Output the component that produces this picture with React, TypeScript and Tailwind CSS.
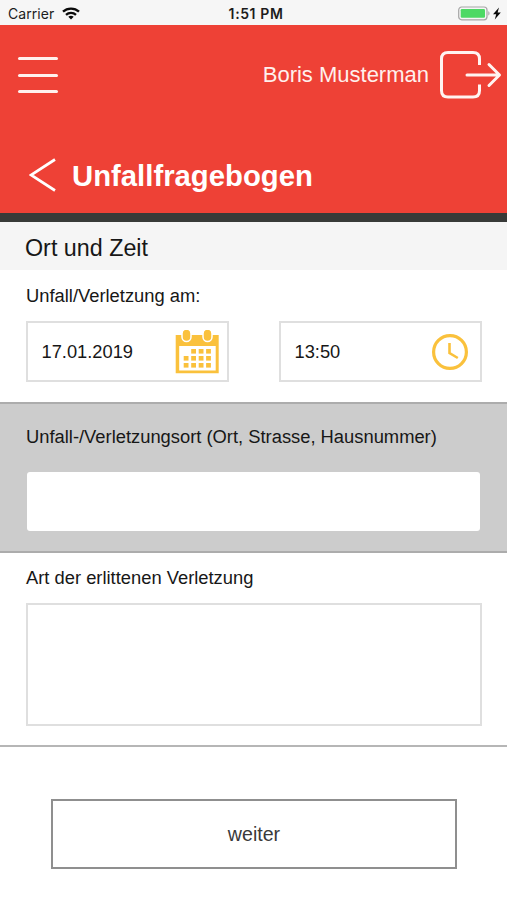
import React from "react";

function StatusBar() {
  return (
    <div className="grid h-[25px] grid-cols-[1fr_auto_1fr] items-center bg-[#f6f6f6] pt-[2px] font-[Inter,sans-serif] text-[14px] leading-none text-[#1c1c1c]">
      <div className="flex items-center gap-2 pl-2">
        <span className="tracking-[0.05px]">Carrier</span>
        <svg width="18" height="13" viewBox="0 0 18 13" fill="none" stroke="#0a0a0a" strokeWidth="2.3">
          <path d="M1 4.7C5.4.5 12.6.5 17 4.7" />
          <path d="M4 7.9c2.8-2.6 7.2-2.6 10 0" />
          <path d="M6.3 9.8 9 12.5l2.7-2.7c-1.5-1.3-3.9-1.3-5.4 0Z" fill="#0a0a0a" stroke="none" />
        </svg>
      </div>
      <span className="pl-[5px] text-[14px] font-semibold tracking-[0.6px]">1:51 PM</span>
      <div className="flex items-center justify-end pr-[4px]">
        <svg width="45" height="15" viewBox="0 0 45 15">
          <rect x=".7" y="1" width="28.3" height="12.8" rx="3" fill="#f6f6f6" stroke="#a5a5a5" strokeWidth="1.2" />
          <rect x="2.7" y="3" width="24.3" height="8.8" rx="1.2" fill="#4cd964" />
          <path d="M30.3 5.3c1.6.5 1.6 3.7 0 4.2Z" fill="#a5a5a5" />
          <path d="m41 1.500-6 6.800h3.200l-1.400 5.300 6-7h-3.200Z" fill="#0a0a0a" />
        </svg>
      </div>
    </div>
  );
}

function Header() {
  return (
    <header className="flex h-[188px] flex-col bg-[#ee4136] text-white">
      <div className="flex h-[100px] shrink-0 items-center justify-between pl-[18px] pr-[5px]">
        <button aria-label="Menü" className="flex flex-col gap-[13.5px]">
          <span className="h-[3px] w-10 rounded-full bg-[#fff0ed]" />
          <span className="h-[3px] w-10 rounded-full bg-[#fff0ed]" />
          <span className="h-[3px] w-10 rounded-full bg-[#fff0ed]" />
        </button>
        <div className="flex items-center gap-[10px]">
          <span className="text-[22px] leading-none text-[#fff0ed]">Boris Musterman</span>
          <svg width="63" height="50" viewBox="0 0 63 50" fill="none" stroke="#fff3f1" strokeWidth="3" strokeLinecap="round" strokeLinejoin="round">
            <path d="M40.500 15V9q0-6.500-6.500-6.500H9Q2.500 2.500 2.500 9v31.500q0 6.500 6.500 6.500h25q6.500 0 6.500-6.500v-6" strokeLinecap="butt" />
            <path d="M28 25h32M50 14.500 60.500 25 50 35.500" />
          </svg>
        </div>
      </div>
      <div className="flex items-start pl-[29px] pt-[33px]">
        <svg className="shrink-0" width="27" height="34" viewBox="0 0 27 34" fill="none" stroke="#fff" strokeWidth="2.7">
          <path d="M26 1.500 2 17l24 15.500" />
        </svg>
        <h1 className="pl-[16px] pt-px text-[29.3px] leading-[34px] font-bold">Unfallfragebogen</h1>
      </div>
    </header>
  );
}

function CalendarIcon() {
  return (
    <svg width="44" height="44" viewBox="0 0 44 44" fill="#fac13c">
      <path d="M.7 5h43v38.200H.7ZM4.200 16v24.500h36.500V16Z" fillRule="evenodd" />
      <rect x="7" y="-1" width="9" height="12.500" rx="4.500" stroke="#fff" strokeWidth="1.500" />
      <rect x="28" y="-1" width="9" height="12.500" rx="4.500" stroke="#fff" strokeWidth="1.500" />
      {[16.2, 23.7, 31.1].map((x) => <rect key={x} x={x} y="19" width="4.800" height="4.600" />)}
      {[8.7, 16.2, 23.7, 31.1].map((x) => <rect key={x} x={x} y="26" width="4.800" height="4.600" />)}
      {[8.7, 16.2, 23.7, 31.1].map((x) => <rect key={x} x={x} y="33" width="4.800" height="4.600" />)}
    </svg>
  );
}

function ClockIcon() {
  return (
    <svg width="38" height="38" viewBox="0 0 38 38" fill="none" stroke="#fac13c" strokeWidth="3.2">
      <circle cx="19" cy="19" r="16.400" />
      <path d="M18.500 10v10l8.300 5" strokeWidth="2.600" />
    </svg>
  );
}

export default function App() {
  return (
    <div className="flex h-[900px] w-[507px] flex-col overflow-hidden bg-white font-['Liberation_Sans',Arial,sans-serif] text-[#171717]">
      <StatusBar />
      <Header />
      <div className="h-[9px] bg-[#383a38]" />
      <h2 className="h-12 bg-[#f5f5f5] pl-[25px] text-[23.3px] leading-[53px]">Ort und Zeit</h2>

      <section className="h-[132px] pl-[26px] pr-[25px] pt-[15px]">
        <p className="pb-[15px] text-[18.35px] leading-[21px]">Unfall/Verletzung am:</p>
        <div className="flex justify-between">
          <div className="flex h-[61px] w-[203px] items-center justify-between border-2 border-[#dfdfdf] pl-[13.5px] pr-2">
            <span className="text-[18.3px]">17.01.2019</span>
            <CalendarIcon />
          </div>
          <div className="flex h-[61px] w-[203px] items-center justify-between border-2 border-[#dfdfdf] pl-[13.5px] pr-[11px]">
            <span className="text-[18.3px]">13:50</span>
            <ClockIcon />
          </div>
        </div>
      </section>

      <section className="h-[151px] border-y-2 border-[#acacac] bg-[#cccccc] px-[26px] pt-[22px]">
        <p className="pb-[25px] text-[18.35px] leading-[21px]">Unfall-/Verletzungsort (Ort, Strasse, Hausnummer)</p>
        <div className="mx-px h-[59px] rounded-[3px] bg-white" />
      </section>

      <section className="h-[194px] border-b-2 border-[#b6b6b6] pl-[26px] pr-[25px] pt-[14px]">
        <p className="pb-[15px] text-[18.35px] leading-[21px]">Art der erlittenen Verletzung</p>
        <div className="h-[123px] border-2 border-[#dfdfdf]" />
      </section>

      <div className="px-[51px] pt-[52px]">
        <button className="block h-[70px] w-[406px] border-2 border-[#8f8f8f] pt-px text-[19.6px] text-[#3a3a3a]">weiter</button>
      </div>
    </div>
  );
}
